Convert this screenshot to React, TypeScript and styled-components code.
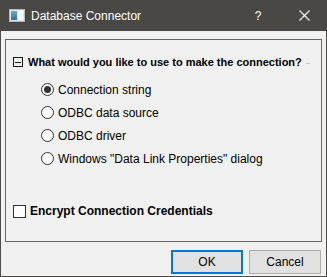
import styled, { createGlobalStyle, css } from "styled-components";

const GlobalStyle = createGlobalStyle`
  html, body {
    margin: 0;
    padding: 0;
    background: #f0f0f0;
  }
  * {
    box-sizing: border-box;
  }
`;

const uiFont = css`
  font-family: "Liberation Sans", Arial, sans-serif;
  font-size: 12px;
`;

const Window = styled.div`
  ${uiFont};
  width: 327px;
  height: 277px;
  display: flex;
  flex-direction: column;
  background: #f0f0f0;
  border: 1px solid #4e4c49;
  border-top: none;
  color: #000;
`;

const TitleBar = styled.div`
  height: 31px;
  margin: 0 -1px;
  background: #4a4845;
  display: flex;
  align-items: center;
  padding-left: 9px;
  color: #fff;
  flex-shrink: 0;
`;

const TitleText = styled.span`
  margin-left: 6px;
  font-size: 12px;
  flex: 1;
`;

const TitleButton = styled.div`
  width: 46px;
  height: 31px;
  display: flex;
  align-items: center;
  justify-content: center;
  color: #fff;
`;

const Body = styled.div`
  flex: 1;
  display: flex;
  flex-direction: column;
  padding: 8px 4px 0 4px;
`;

const Frame = styled.div`
  height: 203px;
  border: 1px solid #686868;
  padding: 16px 0 0 7px;
  display: flex;
  flex-direction: column;
`;

const GroupHeader = styled.div`
  display: flex;
  align-items: center;
  height: 12px;
  font-weight: bold;
  font-size: 11px;
  white-space: nowrap;
`;

const Collapse = styled.span`
  width: 10px;
  height: 10px;
  border: 1px solid #1a1a1a;
  display: inline-flex;
  align-items: center;
  justify-content: center;
  margin-right: 5px;
  flex-shrink: 0;
  &::after {
    content: "";
    width: 6px;
    height: 1px;
    background: #1a1a1a;
  }
`;

const HeaderTail = styled.span`
  width: 4px;
  height: 1px;
  background: #c8c8c8;
  margin-left: 4px;
  margin-top: 2px;
  flex-shrink: 0;
`;

const RadioList = styled.div`
  display: flex;
  flex-direction: column;
  gap: 10px;
  padding: 15px 0 0 28px;
`;

const RadioRow = styled.label`
  display: flex;
  align-items: center;
  height: 13px;
  gap: 4px;
`;

const RadioDot = styled.span<{ $checked?: boolean }>`
  width: 13px;
  height: 13px;
  border-radius: 50%;
  border: 1px solid #333;
  background: #fff;
  display: inline-flex;
  align-items: center;
  justify-content: center;
  &::after {
    content: "";
    width: 7px;
    height: 7px;
    border-radius: 50%;
    background: ${(p) => (p.$checked ? "#333" : "transparent")};
  }
`;

const CheckRow = styled.label`
  display: flex;
  align-items: center;
  gap: 4px;
  margin-top: 39px;
  font-weight: bold;
`;

const CheckBox = styled.span`
  width: 13px;
  height: 13px;
  border: 1px solid #333;
  background: #fff;
`;

const ButtonRow = styled.div`
  display: flex;
  justify-content: flex-end;
  gap: 6px;
  padding: 8px 1px 0 0;
`;

const Button = styled.button<{ $default?: boolean }>`
  ${uiFont};
  width: 72px;
  height: 24px;
  background: #e1e1e1;
  color: #000;
  border: ${(p) => (p.$default ? "2px solid #0078d7" : "1px solid #adadad")};
  padding: 0;
`;

const AppIcon = () => (
  <svg width="16" height="13" viewBox="0 0 16 13">
    <defs>
      <linearGradient id="g" x1="0" y1="0" x2="0" y2="1">
        <stop offset="0" stopColor="#5fb3c9" />
        <stop offset="1" stopColor="#2c6fa0" />
      </linearGradient>
    </defs>
    <rect x="0.5" y="0.5" width="15" height="12" fill="#e8e8e8" stroke="#b8b8b8" />
    <rect x="2" y="2" width="6" height="9" fill="url(#g)" />
    <rect x="9" y="2" width="5" height="9" fill="#ffffff" />
  </svg>
);

const CloseIcon = () => (
  <svg width="11" height="11" viewBox="0 0 11 11">
    <path d="M0.5 0.5 L10.5 10.5 M10.5 0.5 L0.5 10.5" stroke="#fff" strokeWidth="1.1" />
  </svg>
);

const options = [
  "Connection string",
  "ODBC data source",
  "ODBC driver",
  'Windows "Data Link Properties" dialog',
];

const App = () => {
  return (
    <>
      <GlobalStyle />
      <Window>
        <TitleBar>
          <AppIcon />
          <TitleText>Database Connector</TitleText>
          <TitleButton>?</TitleButton>
          <TitleButton>
            <CloseIcon />
          </TitleButton>
        </TitleBar>
        <Body>
          <Frame>
            <GroupHeader>
              <Collapse />
              What would you like to use to make the connection?
              <HeaderTail />
            </GroupHeader>
            <RadioList>
              {options.map((o, i) => (
                <RadioRow key={i}>
                  <RadioDot $checked={i === 0} />
                  {o}
                </RadioRow>
              ))}
            </RadioList>
            <CheckRow>
              <CheckBox />
              Encrypt Connection Credentials
            </CheckRow>
          </Frame>
          <ButtonRow>
            <Button $default>OK</Button>
            <Button>Cancel</Button>
          </ButtonRow>
        </Body>
      </Window>
    </>
  );
};

export default App;
